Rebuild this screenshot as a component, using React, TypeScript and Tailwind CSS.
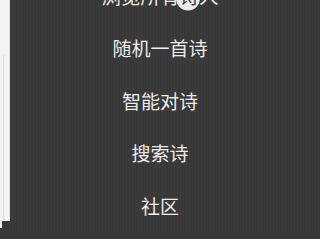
import React from "react";

const items = ["随机一首诗", "智能对诗", "搜索诗", "社区"];

export default function App() {
  return (
    <div
      className="relative flex h-[239px] w-[320px] overflow-hidden bg-[#383838]"
      style={{ fontFamily: '"Noto Sans CJK SC", "Noto Sans", sans-serif' }}
    >
      {/* left white strip */}
      <div className="flex w-[10px] shrink-0 flex-col">
        <div className="h-[221px] border-r border-[#e4e4e4] bg-[#f3f3f5]">
          <div className="ml-[3px] mt-[55px] h-[166px] w-px bg-[#dcdcdc]" />
        </div>
        <div className="h-[7px] w-[2px] bg-[#f3f3f5]" />
      </div>

      {/* menu */}
      <div className="absolute inset-x-0 top-[-30px] flex flex-col items-center bg-[repeating-linear-gradient(90deg,rgba(255,255,255,0.015)_0px,rgba(255,255,255,0.015)_1px,transparent_1px,transparent_3px)]">
        <div className="flex h-[52px] items-center text-[19.5px] text-[#ececec]">
          <span>浏览所有</span>
          <span className="relative inline-block text-[#3a3a3a]">
            <span className="absolute left-[-3px] top-1/2 h-[24px] w-[24px] -translate-y-[40%] rounded-full bg-[#ebebeb]" />
            <span className="relative">诗</span>
          </span>
          <span>人</span>
        </div>
        {items.map((t) => (
          <div
            key={t}
            className="flex h-[52.5px] items-center text-[19px] text-[#ececec]"
          >
            {t}
          </div>
        ))}
      </div>
    </div>
  );
}
